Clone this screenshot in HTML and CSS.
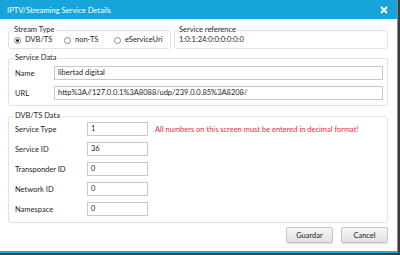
FILE: index.html
```html
<!DOCTYPE html>
<html lang="en">
<head>
    <meta charset="UTF-8">
    <title>IPTV/Streaming Service Details</title>
    <link rel="stylesheet" href="styles.css">
</head>
<body>
    <div class="window">
        <div class="titlebar">
            <span>IPTV/Streaming Service Details</span>
            <svg class="close" width="8" height="8" viewBox="0 0 8 8">
                <path d="M1 1 L7 7 M7 1 L1 7" stroke="#fff" stroke-width="1.8"/>
            </svg>
        </div>

        <div class="content">
            <div class="top-row">
                <fieldset class="group stream-type">
                    <legend>Stream Type</legend>
                    <div class="radios">
                        <label class="radio"><span class="dot checked"></span>DVB/TS</label>
                        <label class="radio"><span class="dot"></span>non-TS</label>
                        <label class="radio"><span class="dot"></span>eServiceUri</label>
                    </div>
                </fieldset>
                <fieldset class="group service-ref">
                    <legend>Service reference</legend>
                    <div class="ref">1:0:1:24:0:0:0:0:0:0</div>
                </fieldset>
            </div>

            <fieldset class="group service-data">
                <legend>Service Data</legend>
                <div class="field wide">
                    <span class="label">Name</span>
                    <span class="input">libertad digital</span>
                </div>
                <div class="field wide">
                    <span class="label">URL</span>
                    <span class="input">http%3A//127.0.0.1%3A8088/udp/239.0.0.85%3A8208/</span>
                </div>
            </fieldset>

            <fieldset class="group dvb-data">
                <legend>DVB/TS Data</legend>
                <div class="field">
                    <span class="label">Service Type</span>
                    <span class="input">1</span>
                    <span class="warning">All numbers on this screen must be entered in decimal format!</span>
                </div>
                <div class="field">
                    <span class="label">Service ID</span>
                    <span class="input">36</span>
                </div>
                <div class="field">
                    <span class="label">Transponder ID</span>
                    <span class="input">0</span>
                </div>
                <div class="field">
                    <span class="label">Network ID</span>
                    <span class="input">0</span>
                </div>
                <div class="field">
                    <span class="label">Namespace</span>
                    <span class="input">0</span>
                </div>
            </fieldset>

            <div class="buttons">
                <button>Guardar</button>
                <button>Cancel</button>
            </div>
        </div>
    </div>
</body>
</html>
```

FILE: styles.css
```css
body {
    margin: 0;
    background-color: #3c3c3c;
    font-family: Lato, "Open Sans", sans-serif;
    font-size: 7.5px;
    color: #1e1e1e;
}
.window {
    width: 397px;
    height: 251px;
    background-color: #fff;
    border-right: 1px solid #8a8a8a;
    border-bottom: 2px solid #1ea7da;
}
.titlebar {
    height: 19px;
    background-color: #17a5d9;
    color: #fff;
    font-size: 7.6px;
    display: flex;
    align-items: center;
    justify-content: space-between;
    padding: 0 9px 0 7px;
}
.content {
    padding: 6px 9px 0 8px;
}
.top-row {
    display: flex;
    gap: 3px;
}
.group {
    margin: 0;
    border: 1px solid #e2e2e2;
    border-radius: 3px;
    padding: 0 6px 3px 6px;
    white-space: nowrap;
}
.group legend {
    padding: 0 1px;
    margin-left: -1px;
    line-height: 10px;
}
.stream-type {
    width: 145px;
    flex: none;
    padding-left: 5px;
}
.service-ref {
    flex: 1;
    padding-left: 4px;
}
.radios {
    display: flex;
    line-height: 10px;
}
.radio {
    display: flex;
    align-items: center;
    gap: 4px;
    width: 50px;
}
.dot {
    width: 7px;
    height: 7px;
    border: 1px solid #8c8c8c;
    border-radius: 50%;
    box-sizing: border-box;
    position: relative;
}
.dot.checked::after {
    content: "";
    position: absolute;
    left: 1px;
    top: 1px;
    width: 3px;
    height: 3px;
    border-radius: 50%;
    background-color: #222;
}
.ref {
    line-height: 10px;
}
.service-data {
    margin-top: 4px;
    padding: 3px 4px 5px 6px;
}
.dvb-data {
    margin-top: 5px;
    padding: 1px 6px 6px 6px;
}
.field {
    display: flex;
    align-items: center;
    height: 14px;
    margin-bottom: 6px;
}
.field:last-child {
    margin-bottom: 0;
}
.label {
    width: 39px;
    flex: none;
}
.dvb-data .label {
    width: 72px;
}
.input {
    box-sizing: border-box;
    height: 14px;
    line-height: 12px;
    border: 1px solid #c8c8c8;
    padding: 0 3px;
    width: 61px;
}
.wide .input {
    flex: 1;
}
.warning {
    color: #f0283c;
    margin-left: 7px;
}
.buttons {
    display: flex;
    justify-content: flex-end;
    gap: 8px;
    margin-top: 4px;
}
button {
    font-family: inherit;
    font-size: 7.5px;
    width: 47px;
    height: 16px;
    padding: 0;
    color: #222;
    border: 1px solid #c4c4c4;
    border-radius: 2px;
    background: linear-gradient(#f6f6f6, #e2e2e2);
    box-shadow: 0 1px 1px rgba(0,0,0,0.12);
}
```
